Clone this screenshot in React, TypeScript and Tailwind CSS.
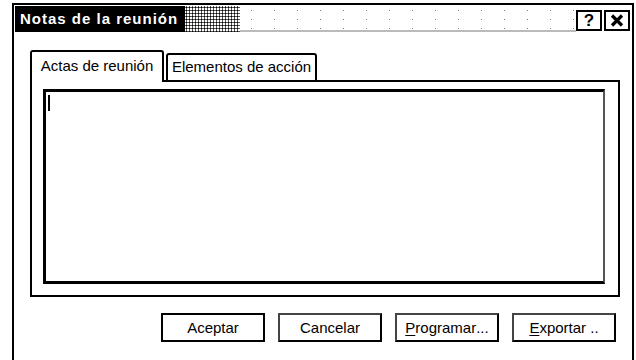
import { useState } from 'react';

const font = { fontFamily: '"Liberation Sans", Arial, sans-serif' };

const DialogButton = ({
  label,
  accel,
  isDefault,
}: {
  label: string;
  accel?: number;
  isDefault?: boolean;
}) => {
  const chars = label.split('');
  return (
    <button
      className={`w-[104px] h-[29px] flex items-center justify-center bg-white text-black text-[15px] leading-none border-[2px] ${
        isDefault ? 'border-black' : 'border-t-[#444] border-l-[#444] border-r-black border-b-black'
      }`}
    >
      {chars.map((c, i) =>
        i === accel ? (
          <span key={i} className="underline underline-offset-2">
            {c}
          </span>
        ) : (
          <span key={i} className="whitespace-pre">
            {c}
          </span>
        )
      )}
    </button>
  );
};

export default function App() {
  const [tab, setTab] = useState(0);

  return (
    <div className="w-[636px] h-[360px] bg-white overflow-hidden pl-[12px] pt-[3px]" style={font}>
      <div className="w-[622px] h-[357px] border-l-[2px] border-r-[2px] border-t-[2px] border-black flex flex-col">
        {/* title bar */}
        <div className="mt-[1px] ml-[1px] mr-[2px] h-[26px] flex items-stretch">
          <div className="w-[170px] bg-black flex items-center pl-[5px]">
            <span className="text-white font-bold text-[15px] tracking-[1px]">Notas de la reunión</span>
          </div>
          <div className="w-[55px] bg-[radial-gradient(#000_0.9px,transparent_1.2px)] bg-[length:3px_3px]" />
          <div className="flex-1 border-b-[2px] border-[#777] bg-[radial-gradient(#000_0.7px,transparent_1px)] bg-[length:23px_9px] opacity-50" />
          <div className="flex items-center gap-[2px] pt-[2px]">
            <div className="w-[26px] h-[21px] border-[2px] border-black flex items-center justify-center font-bold text-[17px] leading-none">
              ?
            </div>
            <div className="w-[26px] h-[21px] border-[2px] border-black flex items-center justify-center">
              <svg width="14" height="13" viewBox="0 0 14 13">
                <path d="M2 1.5 L12 11.5 M12 1.5 L2 11.5" stroke="#000" strokeWidth="3.2" />
              </svg>
            </div>
          </div>
        </div>

        {/* tabs */}
        <div className="ml-[16px] mt-[18px] flex items-end relative z-10 -mb-[2px]">
          <button
            onClick={() => setTab(0)}
            className={`w-[134px] border-t-[2px] border-l-[2px] border-r-[2px] border-black rounded-t-[3px] bg-white text-[15px] text-black flex items-center justify-center ${
              tab === 0 ? 'h-[32px] pb-[2px]' : 'h-[27px] border-b-[2px]'
            }`}
          >
            Actas de reunión
          </button>
          <button
            onClick={() => setTab(1)}
            className={`ml-[2px] w-[151px] border-t-[2px] border-l-[2px] border-r-[2px] border-black rounded-t-[3px] bg-white text-[15px] text-black flex items-center justify-center ${
              tab === 1 ? 'h-[32px] pb-[2px]' : 'h-[29px] border-b-[2px]'
            }`}
          >
            Elementos de acción
          </button>
        </div>

        {/* panel */}
        <div className="ml-[16px] w-[590px] h-[217px] border-[2px] border-black pl-[11px] pt-[7px]">
          <div className="w-[562px] h-[195px] border-t-[3px] border-l-[3px] border-b-[3px] border-r-[2px] border-t-black border-l-black border-b-black border-r-[#555] pl-[2px] pt-[3px]">
            <div className="w-[2px] h-[16px] bg-black" />
          </div>
        </div>

        {/* buttons */}
        <div className="mt-[16px] w-[602px] flex justify-end gap-[13px]">
          <DialogButton label="Aceptar" isDefault />
          <DialogButton label="Cancelar" />
          <DialogButton label="Programar..." accel={0} />
          <DialogButton label="Exportar .." accel={0} />
        </div>
      </div>
    </div>
  );
}
